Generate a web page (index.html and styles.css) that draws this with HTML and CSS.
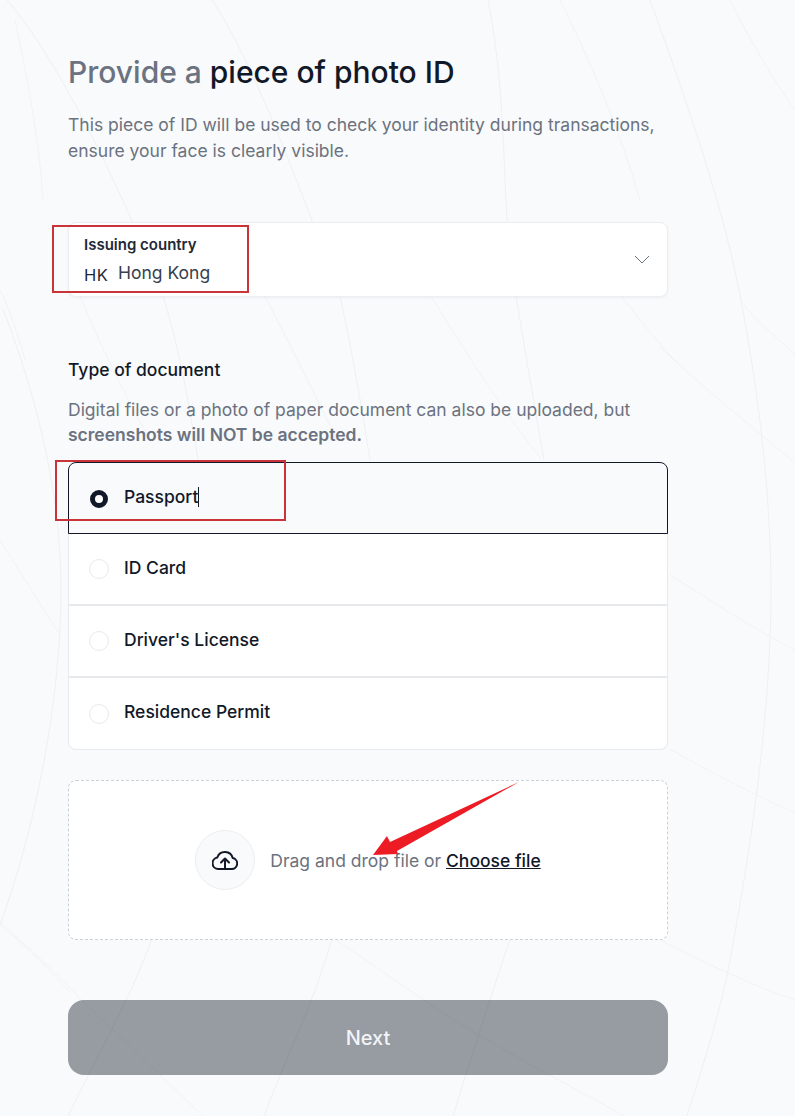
FILE: index.html
```html
<!DOCTYPE html>
<html lang="en">
<head>
<meta charset="utf-8">
<title>Provide a piece of photo ID</title>
<link rel="stylesheet" href="styles.css">
</head>
<body>
<div class="page">
  <svg class="pattern" viewBox="0 0 795 1116" aria-hidden="true">
    <g class="arc">
      <path d="M650 0C690 110 720 200 737 280C755 370 771 480 771 592C771 700 755 830 727 976C715 1030 700 1075 687 1116"/>
      <path d="M3 309C30 380 61 480 61 590C61 700 35 830 0 925"/>
      <path d="M7 0C50 50 110 160 163 296C180 350 190 410 198 460"/>
      <path d="M212 0C250 57 290 160 340 296C352 350 362 410 370 460"/>
      <path d="M488 0C510 110 500 220 516 296C525 350 535 410 544 460"/>
      <path d="M152 939C130 1000 95 1060 68 1116"/>
      <path d="M332 939C315 1000 285 1060 264 1116"/>
      <path d="M510 939C490 1000 470 1060 453 1116"/>
    </g>
    <g class="arc faint">
      <path d="M15 20C30 90 40 150 43 200"/>
      <path d="M0 290C10 310 18 335 25 360"/>
      <path d="M80 296C100 345 125 395 150 440"/>
      <path d="M265 296C290 345 315 395 337 440"/>
      <path d="M431 296C470 360 510 420 542 460"/>
      <path d="M621 296C640 320 660 345 680 366"/>
      <path d="M740 300C755 320 780 340 795 355"/>
      <path d="M660 347C700 385 750 425 795 463"/>
      <path d="M670 575C710 600 755 630 795 650"/>
      <path d="M670 749C710 772 755 795 795 813"/>
      <path d="M660 940C700 960 750 985 795 1000"/>
      <path d="M0 541C20 570 40 605 60 635"/>
      <path d="M0 925C25 945 50 970 70 992"/>
      <path d="M0 922C30 950 60 975 81 1000C115 1030 170 1085 203 1116"/>
      <path d="M335 939C365 960 395 980 424 1000C480 1040 570 1085 624 1116"/>
      <path d="M560 0C590 60 620 130 640 200"/>
      <path d="M730 0C750 40 770 75 795 110"/>
    </g>
  </svg>

  <main class="content">
    <h1 class="title"><span class="title-muted">Provide a</span> piece of photo ID</h1>
    <p class="lead">This piece of ID will be used to check your identity during transactions, ensure your face is clearly visible.</p>

    <div class="country-select">
      <div class="country-text">
        <span class="country-label">Issuing country</span>
        <span class="country-value"><span class="country-code">HK</span>Hong Kong</span>
      </div>
      <svg class="chevron" viewBox="0 0 16 9" aria-hidden="true"><path d="M1 1l7 7 7-7"/></svg>
    </div>

    <h2 class="section-title">Type of document</h2>
    <p class="helper">Digital files or a photo of paper document can also be uploaded, but <strong>screenshots will NOT be accepted.</strong></p>

    <div class="options">
      <div class="option selected"><span class="radio"></span><span class="option-label">Passport<span class="caret"></span></span></div>
      <div class="option"><span class="radio"></span><span class="option-label">ID Card</span></div>
      <div class="option"><span class="radio"></span><span class="option-label">Driver's License</span></div>
      <div class="option"><span class="radio"></span><span class="option-label">Residence Permit</span></div>
    </div>

    <div class="dropzone">
      <span class="upload-circle">
        <svg class="upload-icon" viewBox="0 0 26 21" aria-hidden="true">
          <path d="M6.5 20H19.5A5.5 5.5 0 0 0 20.7 9.1 8 8 0 0 0 5.3 8.5 5.8 5.8 0 0 0 6.5 20Z"/>
          <path d="M13 19.5V9.5M9 13.5L13 9.5L17 13.5"/>
        </svg>
      </span>
      <span class="drop-text">Drag and drop file or <a class="choose" href="#">Choose file</a></span>
    </div>

    <button class="next" type="button">Next</button>
  </main>

  <div class="mark mark-country"></div>
  <div class="mark mark-passport"></div>
  <svg class="arrow" viewBox="0 0 795 1116" aria-hidden="true">
    <polygon points="519,782 397,851 398,854 373,855 387,836 390,842"/>
  </svg>
</div>
</body>
</html>
```

FILE: styles.css
```css
* { box-sizing: border-box; }

html, body { margin: 0; padding: 0; }

body {
  background: #f9fafb;
  font-family: Inter, "Noto Sans", "Liberation Sans", sans-serif;
  color: #111827;
}

.page {
  position: relative;
  width: 795px;
  height: 1116px;
  overflow: hidden;
}

.pattern, .arrow {
  position: absolute;
  left: 0;
  top: 0;
  width: 795px;
  height: 1116px;
}

.arc path { fill: none; stroke: #eef0f2; stroke-width: 1; }
.arc.faint path { stroke: #f2f3f5; }

.content {
  position: relative;
  width: 600px;
  margin-left: 68px;
  padding-top: 54px;
  display: flex;
  flex-direction: column;
}

.title {
  margin: 0;
  font-size: 30px;
  line-height: 36px;
  font-weight: 500;
  color: #111827;
}

.title-muted { color: #6b7280; }

.lead {
  margin: 22px 0 0;
  font-size: 17.5px;
  line-height: 26px;
  color: #6b7280;
}

.country-select {
  margin-top: 58px;
  height: 75px;
  padding: 0 16px 0 15px;
  display: flex;
  align-items: center;
  justify-content: space-between;
  background: #fff;
  border: 1px solid #eceef1;
  border-radius: 8px;
  box-shadow: 0 1px 3px rgba(17, 24, 39, .05);
}

.country-text { display: flex; flex-direction: column; gap: 6px; }

.country-label {
  font-size: 15px;
  line-height: 20px;
  font-weight: 600;
  color: #1f2937;
}

.country-value {
  display: flex;
  align-items: baseline;
  font-size: 17.5px;
  line-height: 24px;
  color: #374151;
}

.country-code {
  width: 34px;
  font-size: 16.5px;
  letter-spacing: .5px;
  color: #1f2937;
  transform: translateY(2px);
}

.chevron { width: 16px; height: 9px; margin-right: 1px; }
.chevron path { fill: none; stroke: #6b7280; stroke-width: 1; }

.section-title {
  margin: 61px 0 0;
  font-size: 17.5px;
  line-height: 24px;
  font-weight: 500;
  color: #111827;
}

.helper {
  margin: 15px 0 0;
  font-size: 17.5px;
  line-height: 25px;
  color: #6b7280;
}

.helper strong { font-weight: 600; }

.options {
  margin-top: 15px;
  display: flex;
  flex-direction: column;
  background: #fff;
  border-radius: 8px;
}

.option {
  height: 72px;
  padding: 0 20px;
  display: flex;
  align-items: center;
  gap: 15px;
  border: 1px solid #e8e9ec;
  border-top: 0;
  border-bottom-width: 2px;
}

.option:last-child { border-bottom-width: 1px; border-radius: 0 0 8px 8px; }

.option.selected {
  background: #f9fafb;
  border: 1px solid #111827;
  border-radius: 8px 8px 0 0;
}

.radio {
  width: 20px;
  height: 20px;
  border-radius: 50%;
  background: #fff;
  border: 1px solid #e8e9ec;
}

.selected .radio {
  width: 18px;
  height: 18px;
  margin: 2px 1px 0;
  border: 5px solid #111827;
}

.option-label {
  margin-bottom: 3px;
  font-size: 17.5px;
  line-height: 24px;
  font-weight: 450;
  color: #111827;
  display: flex;
  align-items: center;
}

.caret {
  width: 1px;
  height: 20px;
  background: #111827;
}

.dropzone {
  margin-top: 30px;
  height: 160px;
  display: flex;
  align-items: center;
  justify-content: center;
  gap: 15px;
  background: #fff;
  border: 1px dashed #cdd0d6;
  border-radius: 8px;
}

.upload-circle {
  width: 60px;
  height: 60px;
  display: flex;
  align-items: center;
  justify-content: center;
  border-radius: 50%;
  background: #f9fafb;
  border: 1px solid #eceef1;
}

.upload-icon { width: 26px; height: 21px; margin-bottom: 2px; }
.upload-icon path { fill: none; stroke: #111827; stroke-width: 2; stroke-linecap: round; stroke-linejoin: round; }

.drop-text {
  margin-top: 2px;
  font-size: 17.5px;
  line-height: 24px;
  color: #6b7280;
}

.choose {
  font-weight: 500;
  color: #111827;
  text-decoration: underline;
}

.next {
  margin-top: 60px;
  height: 75px;
  border: 0;
  border-radius: 16px;
  background: rgba(17, 24, 39, .42);
  color: #f3f4f6;
  font: 500 20px Inter, "Noto Sans", sans-serif;
}

.mark {
  position: absolute;
  border: 2px solid #c9343a;
}

.mark-country { left: 52px; top: 225px; width: 197px; height: 68px; }
.mark-passport { left: 55px; top: 460px; width: 231px; height: 61px; }

.arrow polygon { fill: #ed1c24; }
```
